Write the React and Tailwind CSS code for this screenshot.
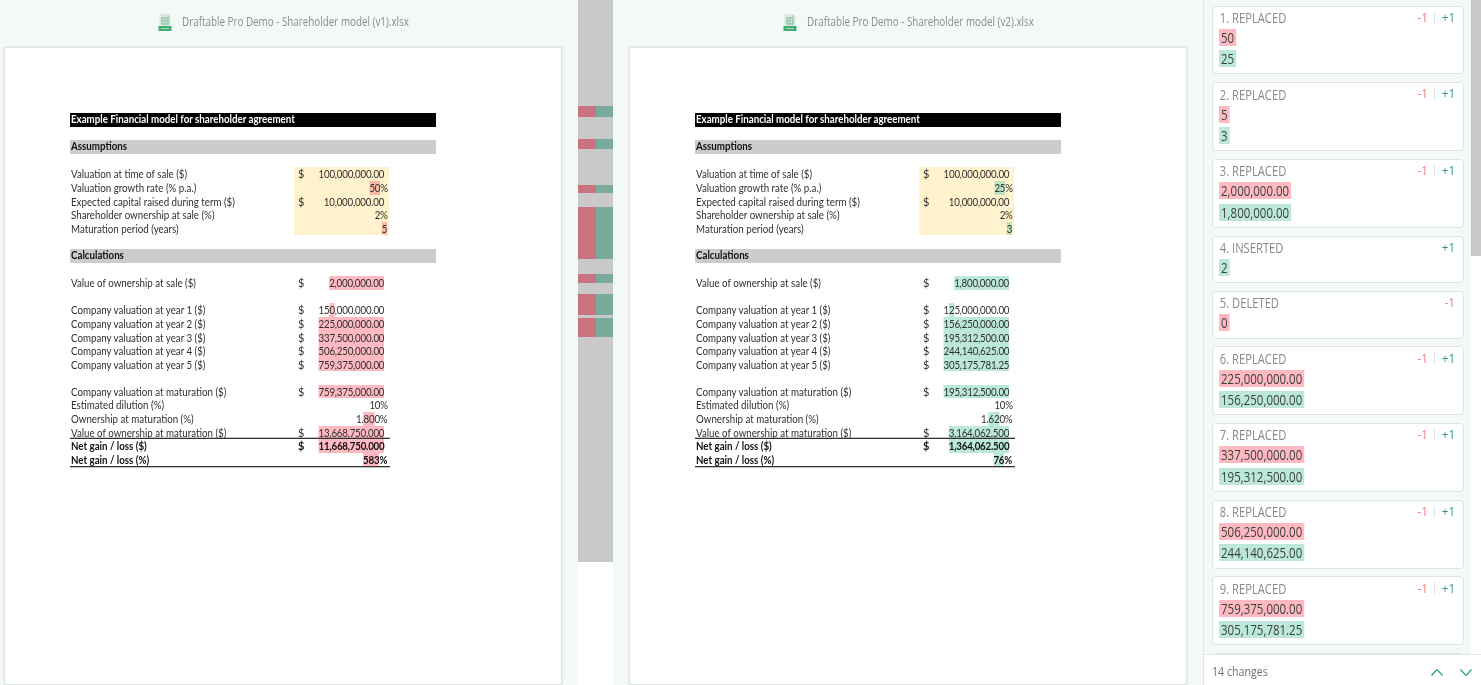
const LATO = "font-['Lato','Carlito',sans-serif]";
const OPEN = "font-['Open_Sans',sans-serif]";

function Val({ parts, tone, yellow }) {
  const bg = yellow
    ? tone === "del" ? "bg-[#fdb8a8]" : "bg-[#c0e2c0]"
    : tone === "del" ? "bg-[#ffb9c0]" : "bg-[#bbe8da]";
  return (
    <span className="inline-block align-top origin-right scale-x-[.885] tracking-[-0.25px]">
      {parts.map((p, i) =>
        Array.isArray(p) ? (
          <span key={i} className={`${bg} inline-block align-top h-[13.6px]`}>{p[0]}</span>
        ) : (
          <span key={i}>{p}</span>
        )
      )}
    </span>
  );
}

function Row({ label, dollar, parts, pct, tone, bold, yellow, topLine, botLine }) {
  return (
    <div
      className={`flex w-[320px] h-[13.6px] leading-[13.6px] ${bold ? "font-bold text-[#111]" : ""} ${topLine ? "relative shadow-[0_-1.3px_0_#333]" : ""} ${botLine ? "relative shadow-[0_1.3px_0_#333]" : ""}`}
    >
      <div className="w-[224px] pl-[1.3px] whitespace-nowrap">
        <span className="inline-block origin-left scale-x-[.885]">{label}</span>
      </div>
      <div className={`flex w-[95px] ${yellow ? "bg-[#fff2cc]" : ""}`}>
        <div className="w-[18px] pl-[4px]">{dollar ? "$" : ""}</div>
        <div className={`flex-1 text-right ${pct ? "pr-[1.5px]" : "pr-[4.5px]"} whitespace-nowrap`}>
          {parts && <Val parts={parts} tone={tone} yellow={yellow} />}
        </div>
      </div>
    </div>
  );
}

const Gap = () => <div className="h-[13.6px]" />;

function Band({ children, black }) {
  return (
    <div
      className={`w-[366px] pl-[1.3px] h-[13.6px] leading-[12.8px] font-bold whitespace-nowrap ${black ? "bg-black text-white" : "bg-[#cdcbcb] text-[#111]"}`}
    >
      <span className="inline-block origin-left scale-x-[.885]">{children}</span>
    </div>
  );
}

function Sheet({ d, tone }) {
  return (
    <div className={`${LATO} text-[11px] text-[#303030] pt-[65px] pl-[65px]`}>
      <Band black>Example Financial model for shareholder agreement</Band>
      <Gap />
      <Band>Assumptions</Band>
      <Gap />
      <Row yellow label="Valuation at time of sale ($)" dollar parts={["100,000,000.00"]} tone={tone} />
      <Row yellow pct label="Valuation growth rate (% p.a.)" parts={[[d.growth], "%"]} tone={tone} />
      <Row yellow label="Expected capital raised during term ($)" dollar parts={["10,000,000.00"]} tone={tone} />
      <Row yellow pct label="Shareholder ownership at sale (%)" parts={["2%"]} tone={tone} />
      <Row yellow pct label="Maturation period (years)" parts={[[d.period]]} tone={tone} />
      <Gap />
      <Band>Calculations</Band>
      <Gap />
      <Row label="Value of ownership at sale ($)" dollar parts={[[d.sale]]} tone={tone} />
      <Gap />
      <Row label="Company valuation at year 1 ($)" dollar parts={d.y1} tone={tone} />
      <Row label="Company valuation at year 2 ($)" dollar parts={[[d.y2]]} tone={tone} />
      <Row label="Company valuation at year 3 ($)" dollar parts={[[d.y3]]} tone={tone} />
      <Row label="Company valuation at year 4 ($)" dollar parts={[[d.y4]]} tone={tone} />
      <Row label="Company valuation at year 5 ($)" dollar parts={[[d.y5]]} tone={tone} />
      <Gap />
      <Row label="Company valuation at maturation ($)" dollar parts={[[d.mat]]} tone={tone} />
      <Row pct label="Estimated dilution (%)" parts={["10%"]} tone={tone} />
      <Row pct label="Ownership at maturation (%)" parts={d.own} tone={tone} />
      <Row label="Value of ownership at maturation ($)" dollar parts={[[d.valMat]]} tone={tone} />
      <Row bold topLine label="Net gain / loss ($)" dollar parts={[[d.net]]} tone={tone} />
      <Row bold pct botLine label="Net gain / loss (%)" parts={d.netPct} tone={tone} />
    </div>
  );
}

function XlsIcon() {
  return (
    <svg width="14" height="17" viewBox="0 0 14 17" className="shrink-0">
      <path d="M1.5 0h8L12.5 3v9h-11z" fill="#dfe3e1" />
      <path d="M9.5 0v3h3z" fill="#c3c9c6" />
      <rect x="4" y="4" width="6" height="6" fill="none" stroke="#6cbb94" strokeWidth="0.9" />
      <path d="M7 4v6M4 7h6" stroke="#6cbb94" strokeWidth="0.7" />
      <rect x="0.5" y="12" width="13" height="5" fill="#3fae72" />
      <rect x="3" y="14" width="8" height="1" fill="#a9dcc0" />
    </svg>
  );
}

function Pane({ name, d, tone }) {
  return (
    <div className="flex flex-col shrink-0 w-[558px]">
      <div className="h-[47px] flex items-center justify-center gap-[10px] pb-[3px] pl-[1px]">
        <XlsIcon />
        <span className={`${OPEN} w-[228px] whitespace-nowrap text-[12px] text-[#868d8b]`}>
          <span className="inline-block origin-left scale-x-[.82]">{name}</span>
        </span>
      </div>
      <div className="flex-1 bg-white border border-[#dfe4e2] shadow-[0_0_2px_#d5dbd9]">
        <Sheet d={d} tone={tone} />
      </div>
    </div>
  );
}

const v1 = {
  growth: "50", period: "5", sale: "2,000,000.00",
  y1: ["15", ["0"], ",000,000.00"],
  y2: "225,000,000.00", y3: "337,500,000.00", y4: "506,250,000.00", y5: "759,375,000.00",
  mat: "759,375,000.00", own: ["1.", ["80"], "0%"], valMat: "13,668,750.000",
  net: "11,668,750.000", netPct: [["583"], "%"],
};
const v2 = {
  growth: "25", period: "3", sale: "1,800,000.00",
  y1: ["1", ["2"], "5,000,000.00"],
  y2: "156,250,000.00", y3: "195,312,500.00", y4: "244,140,625.00", y5: "305,175,781.25",
  mat: "195,312,500.00", own: ["1.", ["62"], "0%"], valMat: "3,164,062.500",
  net: "1,364,062.500", netPct: [["76"], "%"],
};

const marks = [
  ["h-[11px]", 1], ["h-[22px]", 0], ["h-[10px]", 1], ["h-[36px]", 0],
  ["h-[8.5px]", 1], ["h-[13.7px]", 0], ["h-[52.6px]", 1], ["h-[14.4px]", 0], ["h-[9.3px]", 1],
  ["h-[11.3px]", 0], ["h-[20.7px]", 1], ["h-[2.7px]", 0], ["h-[19.3px]", 1],
];

function Gutter() {
  return (
    <div className="w-[35px] shrink-0 mr-[16px] flex flex-col">
      <div className="h-[562px] bg-[#c9c9c9] pt-[105.5px] flex flex-col">
        {marks.map(([h, on], i) => (
          <div key={i} className={`${h} flex shrink-0`}>
            {on ? <div className="w-[18px] bg-[#c9737f]" /> : null}
            {on ? <div className="w-[17px] bg-[#7aaa9b]" /> : null}
          </div>
        ))}
      </div>
      <div className="flex-1 bg-white" />
    </div>
  );
}

const changes = [
  ["1. REPLACED", "50", "25"],
  ["2. REPLACED", "5", "3"],
  ["3. REPLACED", "2,000,000.00", "1,800,000.00"],
  ["4. INSERTED", null, "2"],
  ["5. DELETED", "0", null],
  ["6. REPLACED", "225,000,000.00", "156,250,000.00"],
  ["7. REPLACED", "337,500,000.00", "195,312,500.00"],
  ["8. REPLACED", "506,250,000.00", "244,140,625.00"],
  ["9. REPLACED", "759,375,000.00", "305,175,781.25"],
];

function Pill({ text, del }) {
  return (
    <div className="h-[21.3px] flex items-center">
      <span
        className={`inline-block origin-left scale-x-[.82] h-[17px] leading-[17px] px-[2.5px] text-[#3b3f3e] ${del ? "bg-[#ffb9c0]" : "bg-[#bbe8da]"}`}
      >
        {text}
      </span>
    </div>
  );
}

function Card({ c }) {
  const [title, del, ins] = c;
  return (
    <div className="bg-white border border-[#dfe4e2] rounded-[4px] pl-[6px] pr-[7px] pt-[3px] pb-[4px] shrink-0">
      <div className="flex items-center justify-between h-[16px]">
        <span className="text-[14px] font-medium text-[#858a88] pl-[1px] inline-block origin-left scale-x-[.8] whitespace-nowrap">{title}</span>
        <span className="flex items-center text-[13px]">
          {del && <span className="text-[#ee7b7b] inline-block scale-x-[.9]">-1</span>}
          {del && ins && <span className="w-px h-[12px] bg-[#dfe4e2] mx-[6px]" />}
          {ins && <span className="text-[#2f9a8a] inline-block scale-x-[.9]">+1</span>}
        </span>
      </div>
      <div className="text-[14px] mt-[1.4px]">
        {del && <Pill text={del} del />}
        {ins && <Pill text={ins} />}
      </div>
    </div>
  );
}

function Sidebar() {
  return (
    <div className={`${OPEN} w-[278px] shrink-0 flex flex-col border-l border-[#e2e8e6] h-[685px]`}>
      <div className="flex flex-1 min-h-0">
        <div className="w-[267px] shrink-0 pl-[8px] pr-[7px] pt-[5.5px] flex flex-col gap-[7.7px] overflow-hidden">
          {changes.map((c) => (
            <Card key={c[0]} c={c} />
          ))}
          <div className="h-[69px] shrink-0 bg-white border border-[#dfe4e2] rounded-[4px]" />
        </div>
        <div className="w-[10px] bg-white">
          <div className="h-[255.5px] bg-[#c9c9c9]" />
        </div>
      </div>
      <div className="h-[31px] shrink-0 bg-white border-t border-[#e2e6e5] flex items-center pt-[4px] pl-[8px] pr-[9px] w-full">
        <span className="flex-1 whitespace-nowrap text-[13px] text-[#6f7472]">
          <span className="inline-block origin-left scale-x-[.82]">14 changes</span>
        </span>
        <svg width="12" height="7" viewBox="0 0 12 7" fill="none" stroke="#2f9a8a" strokeWidth="1.2" className="mr-[17px]">
          <path d="M0.5 6.5l5.5-6 5.5 6" />
        </svg>
        <svg width="12" height="7" viewBox="0 0 12 7" fill="none" stroke="#2f9a8a" strokeWidth="1.2">
          <path d="M0.5 0.5l5.5 6 5.5-6" />
        </svg>
      </div>
    </div>
  );
}

export default function App() {
  return (
    <div className="flex h-[685px] w-[1481px] overflow-hidden bg-[#f3f9f7] blur-[0.3px]">
      <div className="w-[578px] shrink-0 pl-[4px] flex">
        <Pane name="Draftable Pro Demo - Shareholder model (v1).xlsx" d={v1} tone="del" />
      </div>
      <Gutter />
      <div className="w-[574px] shrink-0 flex">
        <Pane name="Draftable Pro Demo - Shareholder model (v2).xlsx" d={v2} tone="ins" />
      </div>
      <Sidebar />
    </div>
  );
}
